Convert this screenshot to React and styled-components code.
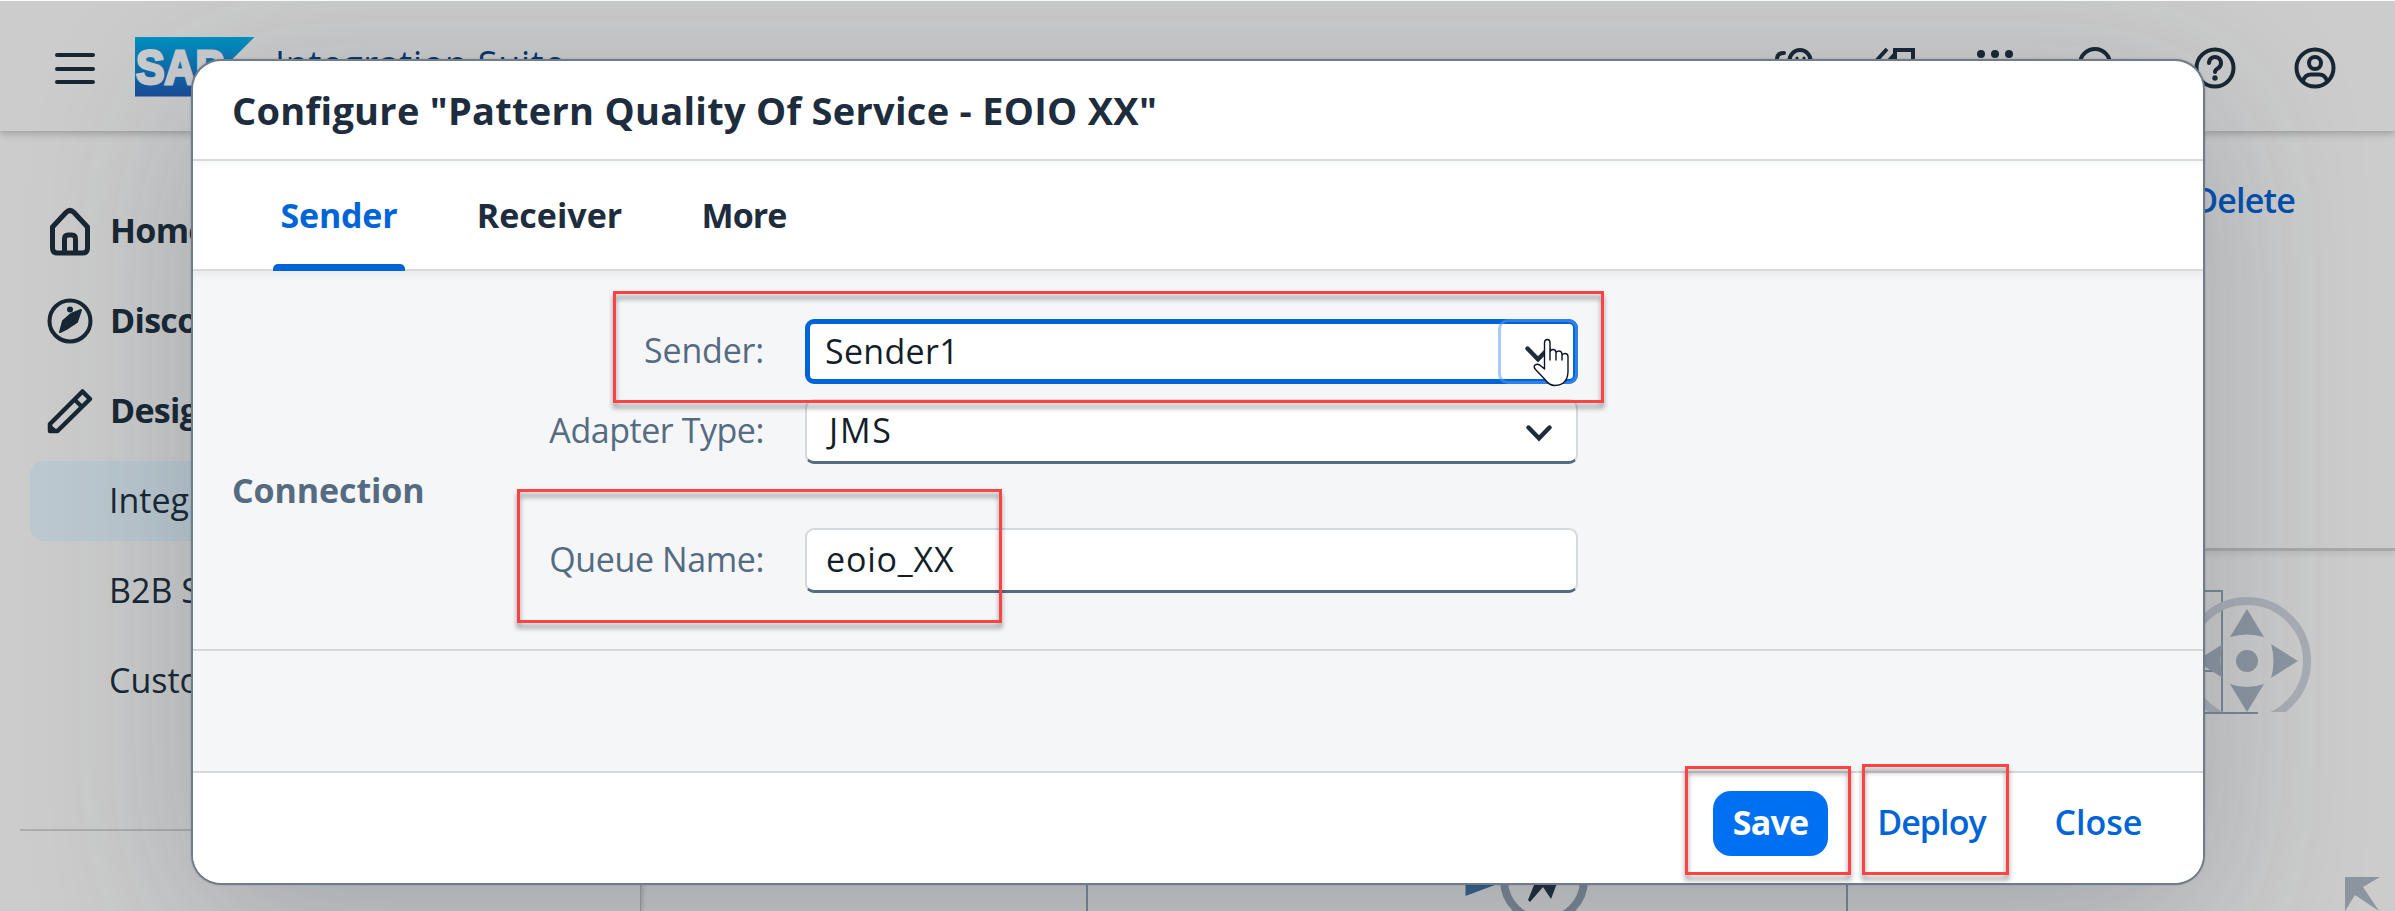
import React from "react";
import styled, { createGlobalStyle, css } from "styled-components";

const GlobalStyle = createGlobalStyle`
  *, *::before, *::after { box-sizing: border-box; }
  body { margin: 0; background: #cccccc; overflow: hidden; }
`;

const INK = "#182733";

/* ---------- page behind the dialog ---------- */

const Page = styled.div`
  position: relative;
  display: flex;
  flex-direction: column;
  height: 911px;
  width: 100%;
  overflow: hidden;
  background: #cccccc;
  border-top: 1px solid #fafafa;
  font-family: "Open Sans", "Noto Sans", sans-serif;
  font-size: 34px;
  line-height: 44px;
  color: ${INK};
`;

const ShellBar = styled.header`
  position: relative;
  flex: none;
  display: flex;
  align-items: center;
  height: 130px;
  padding: 4px 60px 0 55px;
  background: #cccccc;
  box-shadow: 0 2px 8px rgba(0, 0, 0, 0.26);
`;

const MenuIcon = styled.svg`
  width: 40px;
  height: 40px;
  margin-right: 40px;
`;

const LogoSvg = styled.svg`
  width: 120px;
  height: 60px;
  margin-top: -3px;
`;

const ProductName = styled.div`
  margin: -9px auto 0 20px;
  font-size: 36px;
  letter-spacing: 0.7px;
  color: #06366e;
`;

const ShellIcons = styled.div`
  display: flex;
  gap: 60px;
`;

const ShellIcon = styled.svg`
  width: 40px;
  height: 42px;
  fill: none;
  stroke: ${INK};
  stroke-width: 4;
  stroke-linecap: round;
  overflow: visible;
  margin-left: ${(p) => (p.$spaced ? 20 : 0)}px;
`;

const Main = styled.div`
  flex: 1;
  display: flex;
  min-height: 0;
`;

const SideNav = styled.nav`
  flex: none;
  display: flex;
  flex-direction: column;
  width: 641px;
  padding: 60px 20px 0 30px;
  border-right: 1px solid #9c9fa1;
  box-shadow: 2px 0 4px rgba(0, 0, 0, 0.16);
`;

const NavItem = styled.div`
  flex: none;
  display: flex;
  align-items: center;
  height: 80px;
  margin-bottom: 10px;
  padding: 0 0 2px ${(p) => (p.$sub ? 79 : 15)}px;
  border-radius: 14px;
  font-weight: ${(p) => (p.$sub ? 400 : 700)};
  letter-spacing: ${(p) => (p.$sub ? 0 : -0.7)}px;
  background: ${(p) => (p.$active ? "#bcc9d0" : "transparent")};
`;

const NavIcon = styled.svg`
  width: 50px;
  height: 50px;
  margin: 1px 15px 0 0;
  fill: none;
  stroke: ${INK};
  stroke-width: 5;
  stroke-linejoin: round;
`;

const NavRule = styled.hr`
  flex: none;
  width: 600px;
  height: 2px;
  margin: 98px 0 0 -10px;
  border: 0;
  background: #adadae;
`;

const Content = styled.section`
  flex: 1;
  display: flex;
  flex-direction: column;
`;

const ObjectHeader = styled.div`
  flex: none;
  display: flex;
  justify-content: flex-end;
  align-items: flex-start;
  height: 420px;
  padding: 47px 100px 0 0;
  border-bottom: 3px solid #a9a9aa;
  box-shadow: 0 3px 6px rgba(0, 0, 0, 0.08);
`;

const DeleteLink = styled.span`
  font-weight: 600;
  letter-spacing: -0.8px;
  color: #0050ae;
`;

const Canvas = styled.svg`
  flex: none;
  width: 1754px;
  height: 360px;
`;

/* ---------- dialog ---------- */

const Dialog = styled.div`
  position: absolute;
  left: 193px;
  top: 60px;
  width: 2010px;
  height: 822px;
  display: flex;
  flex-direction: column;
  overflow: visible;
  border-radius: 28px;
  background: #ffffff;
  box-shadow: 0 0 0 2px #717c89, 0 0 3px 1px rgba(34, 53, 72, 0.48),
    0 40px 160px rgba(34, 53, 72, 0.25);
`;

const DialogTitle = styled.h1`
  flex: none;
  display: flex;
  align-items: center;
  height: 100px;
  margin: 0;
  padding: 0 39px 1px;
  border-bottom: 2px solid #d9d9d9;
  font-size: 38px;
  font-weight: 700;
  letter-spacing: 0.27px;
  color: #1d2d3e;
`;

const TabBar = styled.div`
  flex: none;
  display: flex;
  height: 110px;
  padding-left: 80px;
  border-bottom: 2px solid #d9d9d9;
  background: linear-gradient(#f6f8f8, #ffffff 8px);
`;

const Tab = styled.div`
  display: flex;
  align-items: center;
  justify-content: center;
  height: 110px;
  width: ${(p) => p.$width}px;
  margin-right: 58px;
  font-weight: 700;
  letter-spacing: ${(p) => p.$tracking}px;
  color: #1d2d3e;
  ${(p) =>
    p.$selected &&
    css`
      color: #0064d9;
      &::after {
        content: "";
        align-self: flex-end;
        width: 132px;
        height: 7px;
        margin-left: -132px;
        border-radius: 5px 5px 0 0;
        background: #0064d9;
      }
    `}
`;

const TabText = styled.span`
  flex: none;
  width: ${(p) => p.$width}px;
  padding-bottom: 2px;
  text-align: center;
`;

const Body = styled.div`
  flex: 1;
  background: linear-gradient(#eaecee, #f5f6f8 10px);
`;

const Form = styled.div`
  display: flex;
  flex-direction: column;
  height: 380px;
  padding-top: 48px;
  border-bottom: 2px solid #d5d7d9;
`;

const FieldRow = styled.div`
  display: flex;
  align-items: center;
  height: 65px;
  margin-bottom: ${(p) => p.$gap || 0}px;
`;

const Label = styled.label`
  width: 571px;
  margin-right: 41px;
  padding-bottom: 3px;
  text-align: right;
  letter-spacing: ${(p) => p.$tracking}px;
  color: #556b82;
`;

const GroupTitle = styled.h2`
  display: flex;
  align-items: center;
  height: 64px;
  margin: 0;
  padding: 0 0 12px 39px;
  font-size: 34px;
  font-weight: 700;
  letter-spacing: -0.1px;
  color: #556b82;
`;

const Field = styled.div`
  display: flex;
  align-items: center;
  justify-content: space-between;
  width: 773px;
  height: 65px;
  padding: 0 24px 1px ${(p) => p.$inset || 19}px;
  border: 2px solid #d3d9df;
  border-bottom: 3px solid #556b82;
  border-radius: 9px;
  background: #ffffff;
  letter-spacing: ${(p) => p.$tracking}px;
  color: #131e29;
  ${(p) =>
    p.$focused &&
    css`
      border: 5px solid #0064d9;
      padding: 0 0 0 15px;
    `}
`;

const FieldText = styled.span`
  padding-bottom: 2px;
`;

const ArrowButton = styled.div`
  flex: none;
  display: flex;
  align-items: center;
  justify-content: center;
  width: 80px;
  height: 65px;
  margin-right: -5px;
  padding-top: 5px;
  border: 3px solid rgba(90, 154, 246, 0.52);
  border-radius: 10px;
`;

const ChevronSvg = styled.svg`
  flex: none;
  width: 26px;
  height: 17px;
  fill: none;
  stroke: #1d2d3e;
  stroke-width: 4.400;
  stroke-linecap: round;
  stroke-linejoin: miter;
`;

const Chevron = () => (
  <ChevronSvg viewBox="0 0 26 17">
    <path d="M2.500 2.500L13 13.300L23.500 2.500" />
  </ChevronSvg>
);

const ArrowSlot = styled.div`
  display: flex;
  width: 26px;
  padding-top: 6px;
`;

const Footer = styled.footer`
  flex: none;
  display: flex;
  align-items: center;
  justify-content: flex-end;
  gap: 30px;
  height: 112px;
  padding: 0 41px 9px 0;
  border-top: 2px solid #d5d7d9;
  border-radius: 0 0 28px 28px;
  background: #ffffff;
`;

const Button = styled.button`
  display: flex;
  align-items: center;
  justify-content: center;
  height: 65px;
  width: ${(p) => p.$width}px;
  padding: 0 0 3px;
  border: 0;
  border-radius: 18px;
  font: inherit;
  font-weight: ${(p) => (p.$primary ? 700 : 600)};
  letter-spacing: ${(p) => p.$tracking}px;
  color: ${(p) => (p.$primary ? "#ffffff" : "#0064d9")};
  background: ${(p) => (p.$primary ? "#0070f2" : "transparent")};
`;

/* ---------- call-outs and pointer over the dialog ---------- */

const Callout = styled.div`
  position: absolute;
  left: ${(p) => p.$x}px;
  top: ${(p) => p.$y}px;
  width: ${(p) => p.$w}px;
  height: ${(p) => p.$h}px;
  border: 3px solid #ff4343;
  filter: drop-shadow(0 5px 2.5px rgba(0, 0, 0, 0.42));
`;

const Pointer = styled.svg`
  position: absolute;
  left: 1533px;
  top: 337px;
  width: 38px;
  height: 50px;
`;

const Logo = () => (
  <LogoSvg viewBox="0 0 120 60">
    <defs>
      <linearGradient id="sap" x1="0" y1="0" x2="0" y2="1">
        <stop offset="0" stopColor="#0092c2" />
        <stop offset="1" stopColor="#1a4b99" />
      </linearGradient>
    </defs>
    <path d="M0 0H119.500L60 59.500H0Z" fill="url(#sap)" />
    <text
      x="1"
      y="47"
      fontFamily="Liberation Sans, sans-serif"
      fontWeight="700"
      fontSize="49"
      textLength="88"
      lengthAdjust="spacingAndGlyphs"
      fill="#cbccce"
      stroke="#cbccce"
      strokeWidth="3"
    >
      SAP
    </text>
  </LogoSvg>
);

const HeaderIcons = () => (
  <ShellIcons>
    <ShellIcon viewBox="0 0 40 42">
      <path d="M2 18V12Q2 6 9 6M25 3a10.500 10.500 0 0 1 10.500 10.500V20a10.500 10.500 0 0 1-21 0V13.500A10.500 10.500 0 0 1 25 3Z" />
      <path d="M22 11v1M29 11v1" strokeWidth="3" />
    </ShellIcon>
    <ShellIcon viewBox="0 0 40 42">
      <path d="M2 13L12 2M20 3H38V24H20Z" strokeLinecap="butt" />
      <path d="M10 15L22 2V15Z" fill={INK} stroke="none" />
    </ShellIcon>
    <ShellIcon viewBox="0 0 40 42">
      {[7, 21, 35].map((y) =>
        [6, 20, 34].map((x) => (
          <circle key={`${x}-${y}`} cx={x} cy={y} r="4" fill={INK} stroke="none" />
        ))
      )}
    </ShellIcon>
    <ShellIcon viewBox="0 0 40 42">
      <circle cx="20" cy="17" r="15" />
    </ShellIcon>
    <ShellIcon viewBox="0 0 40 42" $spaced>
      <circle cx="20" cy="21" r="18.500" />
      <path d="M14 16a6 6 0 1 1 9 5.200Q20 23 20 25" />
      <circle cx="20" cy="31" r="2.700" fill={INK} stroke="none" />
    </ShellIcon>
    <ShellIcon viewBox="0 0 40 42">
      <circle cx="20" cy="21" r="18.500" />
      <circle cx="20" cy="16" r="6" />
      <path d="M8 34Q10 27.500 16 27.500H24Q30 27.500 32 34" />
    </ShellIcon>
  </ShellIcons>
);

const FlowCanvas = () => (
  <Canvas viewBox="641 551 1754 360" fill="none">
    <defs>
      <clipPath id="map">
        <rect x="2100" y="560" width="250" height="152" />
      </clipPath>
    </defs>
    <path
      d="M2100 591H2222V712M2100 671H2222M2100 713H2258"
      stroke="#7b8793"
      strokeWidth="2"
    />
    <circle
      cx="2247"
      cy="661"
      r="60"
      stroke="#a9aeb6"
      strokeWidth="8"
      clipPath="url(#map)"
    />
    <g fill="#8c96a1">
      <circle cx="2247" cy="661" r="11" />
      <path d="M2247 609L2264 637Q2247 632 2230 637Z" />
      <path d="M2247 712L2264 684Q2247 690 2230 684Z" />
      <path d="M2298 661L2271 644Q2276 661 2271 678Z" />
      <path d="M2196 661L2223 644Q2218 661 2223 678Z" />
      <path d="M2345 877H2380L2363 887L2379 911L2355 895L2345 911Z" />
    </g>
    <path d="M1087 860V911M1847 860V911" stroke="#7b8793" strokeWidth="2" />
    <path d="M1401 882H1470V870L1503 882L1465.500 896V885H1401Z" fill="#35608a" />
    <circle cx="1544" cy="880" r="40" stroke="#7b8792" strokeWidth="8" />
    <path
      d="M1540 870H1562L1551 899L1543 887L1530 902L1528 900Z"
      fill="#1c2b39"
    />
  </Canvas>
);

export default function App() {
  return (
    <Page>
      <GlobalStyle />
      <ShellBar>
        <MenuIcon viewBox="0 0 40 40" stroke={INK} strokeWidth="4" strokeLinecap="round">
          <path d="M2 7H38M2 21H38M2 34H38" />
        </MenuIcon>
        <Logo />
        <ProductName>Integration Suite</ProductName>
        <HeaderIcons />
      </ShellBar>
      <Main>
        <SideNav>
          <NavItem>
            <NavIcon viewBox="0 0 50 50">
              <path d="M7.500 21L21 6.500Q25 2.500 29 6.500L42.500 21V42Q42.500 47 37.500 47H12.500Q7.500 47 7.500 42Z" />
              <path d="M19.500 47V33Q19.500 29 23 29H27Q30.500 29 30.500 33V47" />
            </NavIcon>
            Home
          </NavItem>
          <NavItem>
            <NavIcon viewBox="0 0 50 50">
              <circle cx="25" cy="25" r="20.500" strokeWidth="4" />
              <path
                d="M36 14L32 26L23 32L15 36L18 25L26 18Z"
                fill={INK}
                strokeWidth="2"
              />
              <circle cx="25" cy="13.500" r="3" fill={INK} stroke="none" />
            </NavIcon>
            Discover
          </NavItem>
          <NavItem>
            <NavIcon viewBox="0 0 50 50">
              <path d="M5 38L37.500 5.500L45 13L12.500 45H5Z" strokeWidth="4.500" />
              <path d="M29 13L37 21" strokeWidth="4" />
              <path d="M4 37L14 46H4Z" fill={INK} stroke="none" />
            </NavIcon>
            Design
          </NavItem>
          <NavItem $sub $active>
            Integrations
          </NavItem>
          <NavItem $sub>B2B Scenarios</NavItem>
          <NavItem $sub>Custom</NavItem>
          <NavRule />
        </SideNav>
        <Content>
          <ObjectHeader>
            <DeleteLink>Delete</DeleteLink>
          </ObjectHeader>
          <FlowCanvas />
        </Content>
      </Main>

      <Dialog role="dialog">
        <DialogTitle>Configure "Pattern Quality Of Service - EOIO XX"</DialogTitle>
        <TabBar>
          <Tab $selected $width={132} $tracking={-0.2}>
            <TabText $width={132}>Sender</TabText>
          </Tab>
          <Tab $width={173} $tracking={0}>
            <TabText $width={173}>Receiver</TabText>
          </Tab>
          <Tab $width={100} $tracking={-0.9}>
            <TabText $width={100}>More</TabText>
          </Tab>
        </TabBar>
        <Body>
          <Form>
            <FieldRow $gap={15}>
              <Label $tracking={-0.2}>Sender:</Label>
              <Field $focused $tracking={0.3}>
                <FieldText>Sender1</FieldText>
                <ArrowButton>
                  <Chevron />
                </ArrowButton>
              </Field>
            </FieldRow>
            <FieldRow>
              <Label $tracking={-0.45}>Adapter Type:</Label>
              <Field $tracking={1.8} $inset={22}>
                <FieldText>JMS</FieldText>
                <ArrowSlot>
                  <Chevron />
                </ArrowSlot>
              </Field>
            </FieldRow>
            <GroupTitle>Connection</GroupTitle>
            <FieldRow>
              <Label $tracking={-0.4}>Queue Name:</Label>
              <Field $tracking={0.8}>
                <FieldText>eoio_XX</FieldText>
              </Field>
            </FieldRow>
          </Form>
        </Body>
        <Footer>
          <Button $primary $width={115} $tracking={-0.8}>
            Save
          </Button>
          <Button $width={147} $tracking={-0.9}>
            Deploy
          </Button>
          <Button $width={127} $tracking={0}>
            Close
          </Button>
        </Footer>
      </Dialog>

      <Callout $x={613} $y={290} $w={991} $h={112} />
      <Callout $x={517} $y={488} $w={485} $h={134} />
      <Callout $x={1685} $y={765} $w={166} $h={109} />
      <Callout $x={1862} $y={763} $w={147} $h={111} />
      <Pointer viewBox="0 0 38 50">
        <path
          d="M11.500 31V5Q11.500 1.500 14.500 1.500Q17 1.500 17 5V22V14Q17.500 11.500 20 11.500Q22.500 11.500 23 14V22V15Q23.500 13 26 13Q28.500 13 29 16V22V17.500Q29.500 15.500 32 15.500Q34.500 15.500 35 18V33Q35 47 22 47.500Q16 47.500 12 41.500L3 32Q0 29 2 27Q5 25 8 28Z"
          fill="#ffffff"
          stroke="#0b1424"
          strokeWidth="1.400"
          strokeLinejoin="round"
        />
      </Pointer>
    </Page>
  );
}
